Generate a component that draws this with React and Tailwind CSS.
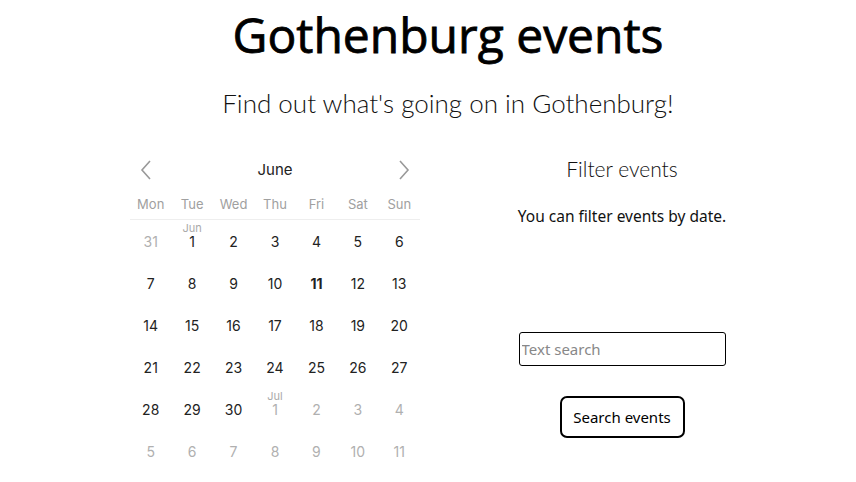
import { useState } from "react";

const WEEKDAYS = ["Mon", "Tue", "Wed", "Thu", "Fri", "Sat", "Sun"];

function buildDays() {
  // June grid, Monday first
  const days = [{ n: 31, muted: true }];
  for (let i = 1; i <= 30; i++) days.push({ n: i, label: i === 1 ? "Jun" : null });
  for (let i = 1; i <= 11; i++) days.push({ n: i, muted: true, label: i === 1 ? "Jul" : null });
  return days;
}

export default function App() {
  const [query, setQuery] = useState("");
  const days = buildDays();

  return (
    <div className="min-h-screen bg-white text-black">
      <div className="pl-[40px]">
        <h1 className="pt-[4px] text-center text-[48px] leading-[62px] font-normal font-['Open_Sans',sans-serif] [-webkit-text-stroke:0.8px_#000]">
          Gothenburg events
        </h1>
        <p className="mt-[21px] text-center text-[26px] leading-[32px] font-light font-['Lato','Open_Sans',sans-serif] text-[#111]">
          Find out what's going on in Gothenburg!
        </p>
      </div>

      <div className="mt-[36px] flex ml-[130px]">
        <div className="w-[290px] font-['Inter',sans-serif]">
          <div className="flex items-center justify-between px-[8px] h-[30px]">
            <Chevron dir="left" />
            <span className="text-[15px] text-[#222]">June</span>
            <Chevron dir="right" />
          </div>
          <div className="mt-[9px] grid grid-cols-7 border-b border-[#eee] pb-[5px]">
            {WEEKDAYS.map((d) => (
              <div key={d} className="text-center text-[13px] leading-[20px] text-[#a0a0a0]">
                {d}
              </div>
            ))}
          </div>
          <div className="grid grid-cols-7">
            {days.map((d, i) => (
              <div key={i} className="relative h-[42px] flex items-center justify-center">
                {d.label && (
                  <span className="absolute top-[1px] left-0 right-0 text-center text-[11px] leading-[14px] text-[#aaa]">
                    {d.label}
                  </span>
                )}
                <span
                  className={
                    "text-[14px] " +
                    (d.muted ? "text-[#b0b0b0]" : "text-[#222]") +
                    (!d.muted && d.n === 11 ? " font-bold" : "")
                  }
                >
                  {d.n}
                </span>
              </div>
            ))}
          </div>
        </div>

        <div className="ml-[77px] w-[250px] flex flex-col items-center">
          <h2 className="mt-[2px] text-[21px] leading-[24px] font-light font-['Lato','Open_Sans',sans-serif] text-[#111]">
            Filter events
          </h2>
          <p className="mt-[25px] text-[15.5px] leading-[20px] font-['Noto_Sans','Open_Sans',sans-serif] text-[#111]">
            You can filter events by date.
          </p>
          <input
            className="mt-[106px] w-[207px] h-[34px] px-[2px] border border-black rounded-[3px] text-[15px] font-['Noto_Sans',sans-serif] placeholder:text-[#888] outline-none"
            placeholder="Text search"
            value={query}
            onChange={(e) => setQuery(e.target.value)}
          />
          <button className="mt-[30px] w-[125px] h-[42px] border-2 border-black rounded-[7px] text-[15px] font-['Noto_Sans',sans-serif] bg-white">
            Search events
          </button>
        </div>
      </div>
    </div>
  );
}

function Chevron({ dir }) {
  return (
    <svg width="16" height="24" viewBox="0 0 16 24" fill="none" stroke="#999" strokeWidth="1.6">
      {dir === "left" ? <path d="M12 3 L4 12 L12 21" /> : <path d="M4 3 L12 12 L4 21" />}
    </svg>
  );
}
